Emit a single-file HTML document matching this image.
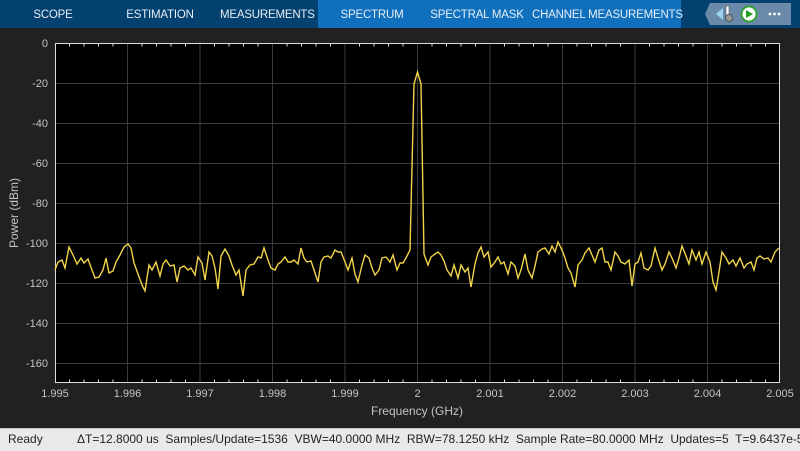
<!DOCTYPE html>
<html><head><style>
body{margin:0;width:800px;height:450px;overflow:hidden;background:#212121;font-family:"Liberation Sans",sans-serif}
.tabs{position:absolute;left:0;top:0;width:800px;height:28px;background:#024170}
.tab{position:absolute;top:0;height:28px;line-height:30px;color:#e6eef5;font-size:11.5px;text-align:center;white-space:nowrap;letter-spacing:-0.2px}
.status{position:absolute;left:0;top:428px;width:800px;height:22px;background:#e9e9e9;border-top:1px solid #c8c8c8;font-size:12px;color:#222;line-height:21px;white-space:nowrap}
</style></head><body>
<div class="tabs">
<div style="position:absolute;left:318px;top:0;width:363px;height:28px;background:#1170bd"></div>
<div class="tab" style="left:20px;width:66px">SCOPE</div>
<div class="tab" style="left:122px;width:76px">ESTIMATION</div>
<div class="tab" style="left:220px;width:88px">MEASUREMENTS</div>
<div class="tab" style="left:334px;width:76px">SPECTRUM</div>
<div class="tab" style="left:426px;width:102px">SPECTRAL MASK</div>
<div class="tab" style="left:532px;width:146px">CHANNEL MEASUREMENTS</div>
<svg style="position:absolute;left:696px;top:3px" width="95" height="22">
<polygon points="9,11 14,0 95,0 95,22 14,22" fill="#6b8aa9"/>
<path d="M20,11 L27,5 L27,17Z" fill="#9fd3f2"/><rect x="30" y="3" width="3" height="10" fill="#fff" stroke="#555" stroke-width=".6"/>
<circle cx="33" cy="15" r="3.5" fill="#999" stroke="#555"/>
<circle cx="53" cy="11" r="7.5" fill="#fff" stroke="#2aa02a" stroke-width="1.8"/><path d="M50,7 L57,11 L50,15Z" fill="#22a022"/>
<circle cx="74" cy="11" r="1.4" fill="#fff"/><circle cx="78.5" cy="11" r="1.4" fill="#fff"/><circle cx="83" cy="11" r="1.4" fill="#fff"/>
</svg>
</div>
<svg style="position:absolute;left:0;top:28px" width="800" height="400" viewBox="0 28 800 400">
<rect x="55" y="43" width="725" height="340" fill="#000"/>
<g stroke="#3c3c3c" stroke-width="1">
<path d="M127.5,43V383M200,43V383M272.5,43V383M345,43V383M417.5,43V383M490,43V383M562.5,43V383M635,43V383M707.5,43V383"/>
<path d="M55,83.5H780M55,123.5H780M55,163.5H780M55,203.5H780M55,243.5H780M55,283.5H780M55,323.5H780M55,363.5H780"/>
</g>
<g stroke="#ddd" stroke-width="1">
<path d="M69.5,43.5v3M84,43.5v3M98.5,43.5v3M113,43.5v3M142,43.5v3M156.5,43.5v3M171,43.5v3M185.5,43.5v3M214.5,43.5v3M229,43.5v3M243.5,43.5v3M258,43.5v3M287,43.5v3M301.5,43.5v3M316,43.5v3M330.5,43.5v3M359.5,43.5v3M374,43.5v3M388.5,43.5v3M403,43.5v3M432,43.5v3M446.5,43.5v3M461,43.5v3M475.5,43.5v3M504.5,43.5v3M519,43.5v3M533.5,43.5v3M548,43.5v3M577,43.5v3M591.5,43.5v3M606,43.5v3M620.5,43.5v3M649.5,43.5v3M664,43.5v3M678.5,43.5v3M693,43.5v3M722,43.5v3M736.5,43.5v3M751,43.5v3M765.5,43.5v3"/>
<path d="M69.5,382.5v-3M84,382.5v-3M98.5,382.5v-3M113,382.5v-3M142,382.5v-3M156.5,382.5v-3M171,382.5v-3M185.5,382.5v-3M214.5,382.5v-3M229,382.5v-3M243.5,382.5v-3M258,382.5v-3M287,382.5v-3M301.5,382.5v-3M316,382.5v-3M330.5,382.5v-3M359.5,382.5v-3M374,382.5v-3M388.5,382.5v-3M403,382.5v-3M432,382.5v-3M446.5,382.5v-3M461,382.5v-3M475.5,382.5v-3M504.5,382.5v-3M519,382.5v-3M533.5,382.5v-3M548,382.5v-3M577,382.5v-3M591.5,382.5v-3M606,382.5v-3M620.5,382.5v-3M649.5,382.5v-3M664,382.5v-3M678.5,382.5v-3M693,382.5v-3M722,382.5v-3M736.5,382.5v-3M751,382.5v-3M765.5,382.5v-3"/>
</g>
<rect x="55.5" y="43.5" width="724" height="339" fill="none" stroke="#ddd"/>
<g font-size="11" fill="#c4c4c4" text-anchor="end">
<text x="48" y="47">0</text><text x="48" y="87">-20</text><text x="48" y="127">-40</text><text x="48" y="167">-60</text><text x="48" y="207">-80</text><text x="48" y="247">-100</text><text x="48" y="287">-120</text><text x="48" y="327">-140</text><text x="48" y="367">-160</text>
</g>
<g font-size="11" fill="#c4c4c4" text-anchor="middle">
<text x="55" y="397">1.995</text><text x="127.5" y="397">1.996</text><text x="200" y="397">1.997</text><text x="272.5" y="397">1.998</text><text x="345" y="397">1.999</text><text x="417.5" y="397">2</text><text x="490" y="397">2.001</text><text x="562.5" y="397">2.002</text><text x="635" y="397">2.003</text><text x="707.5" y="397">2.004</text><text x="780" y="397">2.005</text>
</g>
<text x="417" y="415" font-size="12" fill="#c4c4c4" text-anchor="middle">Frequency (GHz)</text>
<text transform="translate(18,213) rotate(-90)" font-size="12" fill="#c4c4c4" text-anchor="middle">Power (dBm)</text>
<polyline fill="none" stroke="#f2d44a" stroke-width="1.4" points="55,270 58,262 62,260 65,268 69,247 73,255 77,264 81,258 84,263 88,259 92,270 95,278 99,277 103,270 106,258 109,273 113,271 116,262 120,255 124,247 128,244 131,248 134,263 138,274 142,285 145,291 149,265 152,270 156,262 160,276 163,264 166,260 170,266 174,265 177,282 180,268 184,266 188,270 191,268 195,275 198,257 202,263 205,280 209,252 212,256 215,268 218,289 221,256 225,249 229,256 232,265 236,275 239,270 243,296 246,270 250,265 254,264 258,257 261,258 264,248 268,260 271,268 275,270 278,264 281,262 285,257 288,262 291,262 294,260 298,264 301,248 304,258 307,262 311,261 314,270 318,282 321,262 324,257 328,256 331,258 335,250 338,252 341,252 345,262 348,270 352,258 355,274 358,282 362,265 365,255 369,258 372,268 375,275 379,270 382,258 386,257 390,262 393,255 397,270 400,263 403,263 406,258 410,250 414,84 417.5,72 421,84 424,254 428,265 431,257 435,254 438,252 441,255 444,261 447,270 451,276 454,265 458,278 461,265 465,272 468,268 471,287 475,264 478,253 481,247 484,257 488,252 491,267 495,262 498,257 501,264 504,262 508,274 511,262 515,266 518,278 521,270 525,254 528,270 532,278 535,266 538,252 542,249 545,248 549,254 552,246 555,252 558,242 562,250 565,258 568,268 571,273 575,287 578,265 582,260 585,253 589,248 592,255 595,262 599,250 602,248 605,262 608,262 611,270 615,252 618,256 621,262 625,264 629,260 632,286 635,264 638,262 641,253 644,268 648,270 651,266 655,248 658,258 662,270 665,264 669,252 672,258 676,268 679,258 682,246 686,256 689,264 692,250 696,260 699,252 702,264 706,252 710,262 713,282 716,290 719,272 722,252 726,258 729,264 733,260 736,266 740,258 744,268 747,264 751,262 754,270 757,258 760,256 764,259 768,258 771,262 775,252 779,248"/>
</svg>
<div class="status"><span style="position:absolute;left:8px">Ready</span><span style="position:absolute;left:77px">ΔT=12.8000 us&nbsp; Samples/Update=1536&nbsp; VBW=40.0000 MHz&nbsp; RBW=78.1250 kHz&nbsp; Sample Rate=80.0000 MHz&nbsp; Updates=5&nbsp; T=9.6437e-5</span></div>
</body></html>
